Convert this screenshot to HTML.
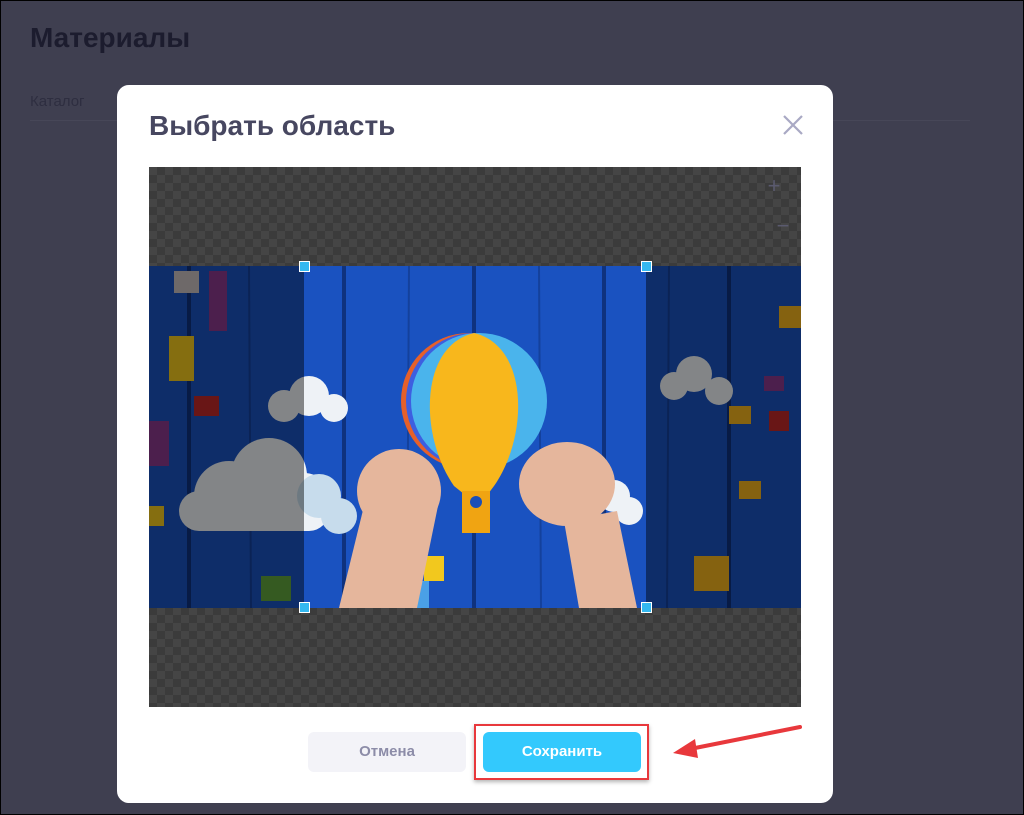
<!DOCTYPE html>
<html><head><meta charset="utf-8"><style>
html,body{margin:0;padding:0}
body{width:1024px;height:815px;position:relative;overflow:hidden;background:#3f3f50;font-family:"Liberation Sans","DejaVu Sans",sans-serif;box-shadow:inset 0 0 0 1px #000}
.h1{position:absolute;left:30px;top:22px;font-size:28px;font-weight:bold;color:#1c1c2e}
.cat{position:absolute;left:30px;top:93px;font-size:15px;color:#2e2e40}
.line{position:absolute;left:30px;top:120px;width:940px;height:1px;background:#474758}
.modal{position:absolute;left:117px;top:85px;width:716px;height:718px;background:#fff;border-radius:12px}
.title{position:absolute;left:149px;top:110px;font-size:28px;font-weight:bold;color:#474760}
.close{position:absolute;left:782px;top:114px}
.crop{position:absolute;left:149px;top:167px}
.btn{position:absolute;top:732px;height:40px;border-radius:6px;font-size:15px;font-weight:bold;text-align:center;line-height:40px}
</style></head><body>
<div class="h1">Материалы</div>
<div class="cat">Каталог</div>
<div class="line"></div>
<div class="modal"></div>
<div class="title">Выбрать область</div>
<svg class="close" width="22" height="22" viewBox="0 0 22 22"><path d="M2 2L20 20M20 2L2 20" stroke="#a9a9c4" stroke-width="2.2"/></svg>
<svg class="crop" width="652" height="540" viewBox="0 0 652 540">
<defs><pattern id="ck" width="16" height="16" patternUnits="userSpaceOnUse"><rect width="16" height="16" fill="#3b3b3b"/><rect width="8" height="8" fill="#454545"/><rect x="8" y="8" width="8" height="8" fill="#454545"/></pattern></defs>
<rect width="652" height="540" fill="url(#ck)"/>
<text x="625" y="26" font-size="22" fill="#5a5a6e" text-anchor="middle">+</text>
<text x="634" y="66" font-size="22" fill="#5a5a6e" text-anchor="middle">−</text>
<g transform="translate(0,99)">
<rect width="652" height="342" fill="#1a52c0"/>
<g stroke="#0d2b6e" stroke-width="4" opacity="0.8"><line x1="40" y1="0" x2="40" y2="342"/><line x1="195" y1="0" x2="195" y2="342"/><line x1="325" y1="0" x2="325" y2="342"/><line x1="455" y1="0" x2="455" y2="342"/><line x1="580" y1="0" x2="580" y2="342"/></g>
<g stroke="#123a8e" stroke-width="2" opacity="0.7"><line x1="100" y1="0" x2="102" y2="342"/><line x1="260" y1="0" x2="258" y2="342"/><line x1="390" y1="0" x2="392" y2="342"/><line x1="520" y1="0" x2="518" y2="342"/></g>
<g fill="#eef2f6"><circle cx="135" cy="140" r="16"/><circle cx="160" cy="130" r="20"/><circle cx="185" cy="142" r="14"/><circle cx="80" cy="230" r="35"/><circle cx="120" cy="210" r="38"/><circle cx="155" cy="235" r="28"/><rect x="30" y="225" width="150" height="40" rx="20"/>
<circle cx="525" cy="120" r="14"/><circle cx="545" cy="108" r="18"/><circle cx="570" cy="125" r="14"/><circle cx="465" cy="230" r="16"/><circle cx="480" cy="245" r="14"/></g>
<g fill="#c7dcec"><circle cx="170" cy="230" r="22"/><circle cx="190" cy="250" r="18"/></g>
<circle cx="320" cy="135" r="68" fill="#e6602a"/><circle cx="325" cy="135" r="68" fill="#3d5fe0"/><circle cx="330" cy="135" r="68" fill="#4ab4ec"/>
<path d="M325 67C270 80 270 170 305 220L330 240L345 220C380 170 380 80 325 67Z" fill="#f8b71c"/>
<rect x="313" y="225" width="28" height="42" fill="#f0a412"/><circle cx="327" cy="236" r="6" fill="#1b4fb8"/>
<g fill="#f2c81e"><rect x="275" y="290" width="20" height="25"/></g>
<rect x="258" y="315" width="22" height="27" fill="#4aa0e6"/>
<g fill="#e5b69c"><path d="M190 342L215 240L290 235L268 342Z"/><ellipse cx="250" cy="225" rx="42" ry="42"/><path d="M415 255L468 245L488 342L430 342Z"/><ellipse cx="418" cy="218" rx="48" ry="42"/></g>
<g fill="#f2c81e"><rect x="20" y="70" width="25" height="45"/><rect x="0" y="240" width="15" height="20"/></g>
<g fill="#8a3a8c"><rect x="60" y="5" width="18" height="60"/><rect x="0" y="155" width="20" height="45"/><rect x="615" y="110" width="20" height="15"/></g>
<g fill="#c02828"><rect x="45" y="130" width="25" height="20"/><rect x="620" y="145" width="20" height="20"/></g>
<g fill="#f2b21e"><rect x="630" y="40" width="22" height="22"/><rect x="580" y="140" width="22" height="18"/><rect x="590" y="215" width="22" height="18"/><rect x="545" y="290" width="35" height="35"/></g>
<rect x="112" y="310" width="30" height="25" fill="#62a43c"/>
<rect x="25" y="5" width="25" height="22" fill="#c9c0c0"/>
<rect x="0" y="0" width="155" height="342" fill="rgba(0,0,0,0.45)"/>
<rect x="497" y="0" width="155" height="342" fill="rgba(0,0,0,0.45)"/>
<g fill="#34b8f0" stroke="#fff" stroke-width="1"><rect x="150.5" y="-4.5" width="10" height="10"/><rect x="492.5" y="-4.5" width="10" height="10"/><rect x="150.5" y="336.5" width="10" height="10"/><rect x="492.5" y="336.5" width="10" height="10"/></g>
</g>
</svg>
<div class="btn" style="left:308px;width:158px;background:#f3f3f8;color:#8c8ca8">Отмена</div>
<div style="position:absolute;left:474px;top:724px;width:175px;height:56px;border:2px solid #e8383c;box-sizing:border-box;box-shadow:0 2px 4px rgba(0,0,0,0.3)"></div>
<div class="btn" style="left:483px;width:158px;background:#33c9fd;color:#fff">Сохранить</div>
<svg style="position:absolute;left:665px;top:720px" width="145" height="45" viewBox="0 0 145 45"><path d="M135 7L25 29" stroke="#e8383c" stroke-width="4" stroke-linecap="round"/><path d="M8 33L30 19L33 38Z" fill="#e8383c"/></svg>
</body></html>
